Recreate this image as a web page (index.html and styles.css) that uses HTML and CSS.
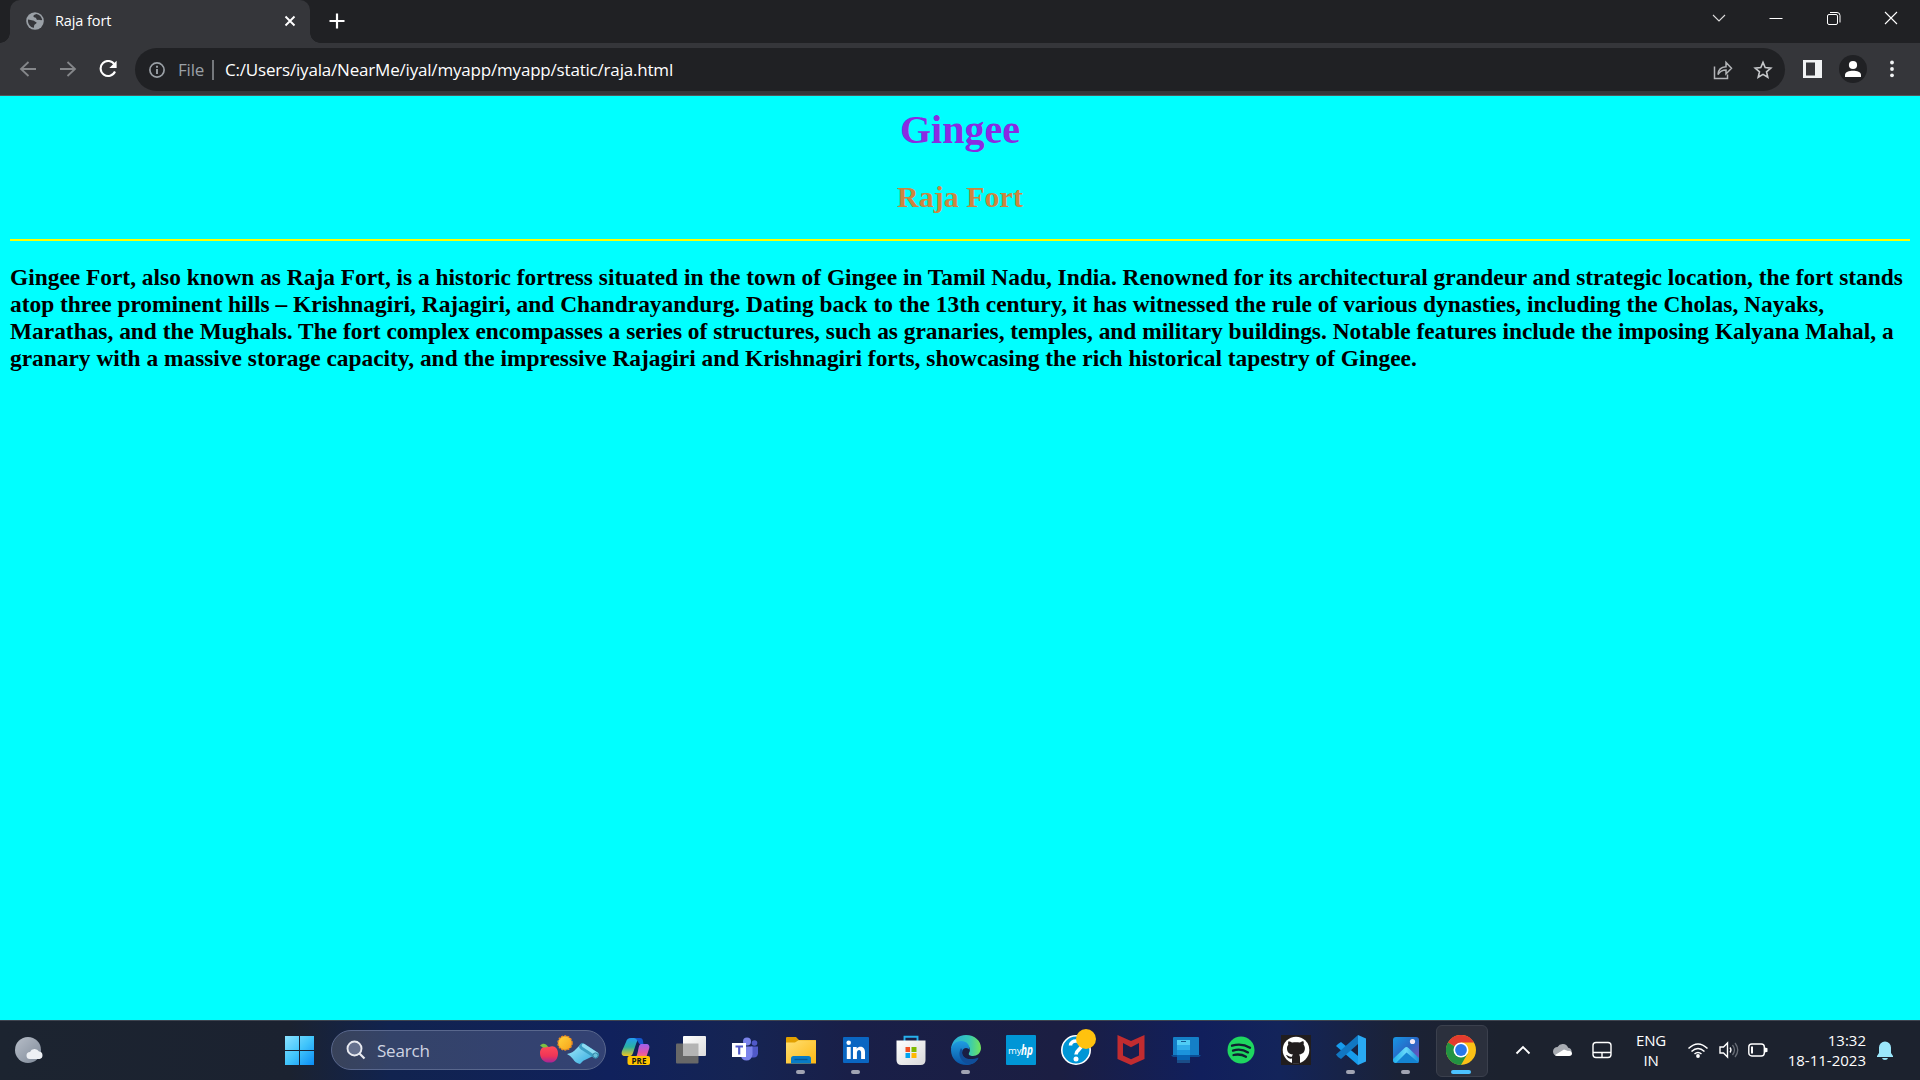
FILE: index.html
```html
<!DOCTYPE html>
<html lang="en">
<head>
<meta charset="utf-8">
<title>Raja fort</title>
<link rel="stylesheet" href="styles.css">
</head>
<body>
<header class="tabstrip">
  <div class="tab">
    <svg class="globe" width="18" height="18" viewBox="0 0 18 18"><circle cx="9" cy="9" r="8.800" fill="#9aa0a6"/><path d="M2 7.500c2 .2 3.500.8 5 1 1.500.2 1.800 1.200 3 1.500 1 .5.600 1.600-.5 2-1.300.5-1.500 1.800-1.500 3.800C4 15.500 1.500 11.500 2 7.500zM10.500 2c-2 .5-3.500 1.500-3 2.700.5.900 2.500.3 2.700 1.500.2 1 .5 1.900 2 1.700 1.500-.2 2.300.5 4 .2C15.800 5 13.500 2.500 10.500 2z" fill="#35363a"/></svg>
    <span class="tab-title">Raja fort</span>
    <svg class="tab-close" width="12" height="12" viewBox="0 0 12 12"><path d="M1.500 1.500l9 9m0-9l-9 9" stroke="#fff" stroke-width="1.900"/></svg>
  </div>
  <svg class="newtab" width="16" height="16" viewBox="0 0 16 16"><path d="M8 .5v15M.5 8h15" stroke="#fff" stroke-width="2.200"/></svg>
  <div class="window-controls">
    <svg width="16" height="16" viewBox="0 0 16 16"><path d="M2 5l6 6 6-6" fill="none" stroke="#ddd" stroke-width="1.100"/></svg>
    <svg width="16" height="16" viewBox="0 0 16 16"><path d="M1.500 8.500h13" stroke="#fff"/></svg>
    <svg width="16" height="16" viewBox="0 0 16 16"><rect x="1.500" y="4.500" width="10" height="10" rx="1.500" fill="none" stroke="#fff"/><path d="M4 2.500h7a3 3 0 0 1 3 3v7" fill="none" stroke="#fff"/></svg>
    <svg width="16" height="16" viewBox="0 0 16 16"><path d="M2 2l12 12M14 2L2 14" stroke="#fff" stroke-width="1.100"/></svg>
  </div>
</header>
<nav class="toolbar">
  <div class="nav-buttons">
    <svg width="18" height="18" viewBox="0 0 18 18"><path d="M17 9H2m7.500-7L2 9l7.500 7" fill="none" stroke="#85878a" stroke-width="1.800"/></svg>
    <svg width="18" height="18" viewBox="0 0 18 18"><path d="M1 9h15M8.500 2L16 9l-7.500 7" fill="none" stroke="#85878a" stroke-width="1.800"/></svg>
    <svg width="18" height="18" viewBox="0 0 18 18"><path d="M15.500 4.500A7.500 7.500 0 1 0 16 11.500" fill="none" stroke="#fff" stroke-width="2.100"/><path d="M17.600.8v7.300h-7.300z" fill="#fff"/></svg>
  </div>
  <div class="omnibox">
    <svg class="info" width="16" height="16" viewBox="0 0 16 16"><circle cx="8" cy="8" r="7.100" fill="none" stroke="#9aa0a6" stroke-width="1.700"/><path d="M8 7v5M8 3.800v2" stroke="#9aa0a6" stroke-width="1.900"/></svg>
    <span class="scheme">File</span>
    <span class="divider"></span>
    <span class="url">C:/Users/iyala/NearMe/iyal/myapp/myapp/static/raja.html</span>
    <svg class="share" width="20" height="20" viewBox="0 0 20 20"><path d="M1.500 6.500v12h13v-4" fill="none" stroke="#b3b5b8" stroke-width="1.500"/><path d="M5 14.500c.3-5 3-7.500 8-7.700V2.500l5.500 5.800L13 14v-4c-3.500 0-6 1.200-8 4.500z" fill="none" stroke="#b3b5b8" stroke-width="1.500"/></svg>
    <svg class="star" width="20" height="20" viewBox="0 0 20 20"><path d="M10 2.400l2.200 5.200 5.600.5-4.300 3.700 1.300 5.500L10 14.400l-4.800 2.900 1.300-5.500-4.300-3.700 5.600-.5z" fill="none" stroke="#c5c7ca" stroke-width="1.600"/></svg>
  </div>
  <div class="actions">
    <svg width="19" height="18" viewBox="0 0 19 18"><path fill-rule="evenodd" d="M0 0h19v18H0zM3 2.500v13h9v-13z" fill="#f1f3f4"/></svg>
    <svg width="28" height="28" viewBox="0 0 28 28"><circle cx="14" cy="14" r="14" fill="#202124"/><circle cx="14" cy="10" r="4.100" fill="#fff"/><path d="M6 22v-2c0-3 4-4.300 8-4.300s8 1.300 8 4.300v2z" fill="#fff"/></svg>
    <svg width="6" height="18" viewBox="0 0 6 18"><g fill="#f1f3f4"><circle cx="3" cy="2.500" r="1.900"/><circle cx="3" cy="9" r="1.900"/><circle cx="3" cy="15.300" r="1.900"/></g></svg>
  </div>
</nav>
<main class="page">
  <h1 class="place">Gingee</h1>
  <h2 class="fort">Raja Fort</h2>
  <hr class="rule">
  <h3 class="about">Gingee Fort, also known as Raja Fort, is a historic fortress situated in the town of Gingee in Tamil Nadu, India. Renowned for its architectural grandeur and strategic location, the fort stands<br>atop three prominent hills – Krishnagiri, Rajagiri, and Chandrayandurg. Dating back to the 13th century, it has witnessed the rule of various dynasties, including the Cholas, Nayaks,<br>Marathas, and the Mughals. The fort complex encompasses a series of structures, such as granaries, temples, and military buildings. Notable features include the imposing Kalyana Mahal, a<br>granary with a massive storage capacity, and the impressive Rajagiri and Krishnagiri forts, showcasing the rich historical tapestry of Gingee.</h3>
</main>
<footer class="taskbar">
  <div class="weather">
    <svg width="30" height="30" viewBox="0 0 30 30"><defs><linearGradient id="moon" x2="1" y2="1"><stop stop-color="#b7bec8"/><stop offset="1" stop-color="#7f8a99"/></linearGradient></defs><circle cx="15" cy="15" r="13" fill="url(#moon)"/><path d="M17 24a3.500 3.500 0 0 1 0-7 5 5 0 0 1 9-.5 3.800 3.800 0 0 1 .5 7.500z" fill="#edf0f4"/></svg>
  </div>
  <div class="start">
    <svg width="30" height="30" viewBox="0 0 30 30"><defs><linearGradient id="win" x2="1" y2="1"><stop stop-color="#8be2ff"/><stop offset=".5" stop-color="#41c5fb"/><stop offset="1" stop-color="#0a8cf5"/></linearGradient></defs><path d="M1 1h14v14H1zM16 1h14v14H16zM1 16h14v14H1zM16 16h14v14H16z" fill="url(#win)"/></svg>
  </div>
  <div class="search">
    <svg class="lens" width="20" height="20" viewBox="0 0 20 20"><circle cx="8.500" cy="8.500" r="7" fill="#65708d" stroke="#e8eaf0" stroke-width="1.900"/><path d="M13.500 13.500L18.500 18.500" stroke="#e8eaf0" stroke-width="2.200"/></svg>
    <span class="search-text">Search</span>
    <svg class="doodle" width="62" height="32" viewBox="0 0 62 32"><defs><linearGradient id="apple" x2="0" y2="1"><stop stop-color="#ff4c58"/><stop offset=".6" stop-color="#ef3557"/><stop offset="1" stop-color="#a3259a"/></linearGradient><linearGradient id="sun" x2="1" y2="1"><stop stop-color="#ffd43b"/><stop offset="1" stop-color="#f6a31b"/></linearGradient><linearGradient id="mat" x2="1" y2="1"><stop stop-color="#a5eafa"/><stop offset="1" stop-color="#30a9df"/></linearGradient></defs><path d="M11 13c5-2.500 9 1 9 6 0 6-3.500 9.500-6.500 9.500-1.500-.2-2 .2-3.500 0C5 28 2 24 2 19c0-5 5-8 9-6z" fill="url(#apple)"/><path d="M2 11.500c3-3 6-2 8 1-3 2-6 1-8-1z" fill="#7bc143"/><circle cx="27" cy="9" r="7" fill="url(#sun)" stroke="#ef8d20" stroke-width="1.500" stroke-dasharray="2 1.200"/><path d="M29 20q6-1 9-5l5-5 14 11-8 4q-4 1-7 5-5-1-7-5-2-3-6-5z" fill="url(#mat)"/><path d="M44.500 12.500l13 8.500" stroke="#3c9fc4" stroke-width="6.500" stroke-linecap="round"/><path d="M45.500 11.500l13 8.500" stroke="#8ddcf2" stroke-width="3.500" stroke-linecap="round"/><circle cx="57.500" cy="21.500" r="2.600" fill="#69bdd8" stroke="#2c7fa2"/></svg>
  </div>
  <div class="apps">
    <div class="app"><svg width="30" height="30" viewBox="0 0 30 30"><defs><linearGradient id="cpa" x2="0" y2="1"><stop stop-color="#239cf0"/><stop offset=".5" stop-color="#2ab1a2"/><stop offset="1" stop-color="#f0c51d"/></linearGradient><linearGradient id="cpb" x2="0" y2="1"><stop stop-color="#9c61ee"/><stop offset=".6" stop-color="#e055ac"/><stop offset="1" stop-color="#ff7c65"/></linearGradient></defs><path d="M10 3h9c-2 1-3 3-4 6l-3 9c-.7 2-1.500 3-3 3H4c-3 0-4-2-3-5l4-9c1-3 2-4 5-4z" fill="url(#cpa)"/><path d="M13 3h6c3 0 3 3 3.500 6H19c-2-.5-2-5-6-6z" fill="#1457cf"/><path d="M20 9h5c3 0 4 2 3 5l-3 9H14c1.500-1 2-3 3-7 .7-3 1-7 3-7z" fill="url(#cpb)"/><rect x="6.500" y="21" width="22.500" height="9" rx="2" fill="#ffc400"/><text class="pre" x="18" y="28.500" text-anchor="middle">PRE</text></svg></div>
    <div class="app"><svg width="30" height="30" viewBox="0 0 30 30"><defs><linearGradient id="tv" x2="1" y2="1"><stop stop-color="#fff"/><stop offset="1" stop-color="#dcdcdc"/></linearGradient></defs><rect y="8.500" width="22.500" height="20" rx="1" fill="#686868"/><rect x="7" y="1" width="23" height="20" rx="1" fill="url(#tv)"/><path d="M7 8.500h15.500V21H7z" fill="#b4b4b4"/></svg></div>
    <div class="app"><svg width="30" height="30" viewBox="0 0 30 30"><circle cx="16" cy="6.500" r="4" fill="#7b83eb"/><circle cx="23.500" cy="8" r="2.800" fill="#5059c9"/><path d="M20 11.500h7v7q-.5 4-4 4h-3z" fill="#5059c9"/><path d="M10 11.500h11.500v8q-1 6-6 6t-5.500-5z" fill="#7b83eb"/><path d="M1 8h14v14H1z" fill="#fff"/><path d="M4.500 11.500h7.500M8.200 11v8.500" stroke="#5059c9" stroke-width="2.200"/></svg></div>
    <div class="app running"><svg width="30" height="30" viewBox="0 0 30 30"><defs><linearGradient id="fold" x2="1" y2="1"><stop stop-color="#ffdf72"/><stop offset="1" stop-color="#fdb813"/></linearGradient></defs><path d="M0 3q0-1 1-1h9l3 3h16q1 0 1 1v5H0z" fill="#e2a000"/><path d="M0 7.500h9l3.500-2.300H30V28.500H0z" fill="url(#fold)"/><path d="M5 28.500v-5q0-2.500 2.500-2.500h15q2.500 0 2.500 2.500v5z" fill="#087bc6"/><path d="M8.500 24.500h13" stroke="#075896" stroke-width="1.300"/></svg></div>
    <div class="app running"><svg width="30" height="30" viewBox="0 0 30 30"><rect x="2" y="2" width="26" height="26" rx="1" fill="#0a66c2"/><circle cx="7.700" cy="7.800" r="2.300" fill="#fff"/><path d="M5.800 12h3.900v12H5.800zM12 12h3.700v1.700c2.500-3.300 8.300-2.500 8.300 3.300v7h-3.900v-6.200c0-4-4.200-3.700-4.200 0V24H12z" fill="#fff"/></svg></div>
    <div class="app"><svg width="30" height="30" viewBox="0 0 30 30"><defs><linearGradient id="bag" x2="1" y2="1"><stop stop-color="#fff"/><stop offset="1" stop-color="#d9d9d9"/></linearGradient></defs><path d="M8.500 7V1.800h13V7" fill="none" stroke="#27b0ec" stroke-width="1.900"/><path d="M.5 5.500h29V25q0 5-5 5h-19q-5 0-5-5z" fill="url(#bag)"/><path d="M9.500 12H14v5H9.500z" fill="#f25022"/><path d="M15.500 12h5v5h-5z" fill="#7fba00"/><path d="M9.500 18H14v5H9.500z" fill="#00a4ef"/><path d="M15.500 18h5v5h-5z" fill="#ffb900"/></svg></div>
    <div class="app running"><svg width="30" height="30" viewBox="0 0 30 30"><defs><linearGradient id="edg"><stop stop-color="#2aa9dc"/><stop offset=".6" stop-color="#35c9b7"/><stop offset="1" stop-color="#72e55b"/></linearGradient><linearGradient id="edb" x2="0" y2="1"><stop stop-color="#1f9de1"/><stop offset="1" stop-color="#0953a4"/></linearGradient></defs><path d="M0 14C1 5 7 0 15 0c9 0 15 6 15 13 0 5-4 8-8 8-3 0-5-1-4-3 3-5-1-9-7-9C6 9 2 11 0 14z" fill="url(#edg)"/><path d="M0 15c0-5 5-9 10-9 6 0 9 4 8.500 9-1-2-4-3-6-1-4 4 0 11 7 11 4 0 6-1 8-2-3 5-7 7-12 7C7 30 0 24 0 15z" fill="url(#edb)"/><path d="M10 13c-4 7 0 15 8 16.500 4-.5 8-3.500 9.500-7-10 4-18 0-16-7z" fill="#104e9a"/></svg></div>
    <div class="app"><svg width="30" height="30" viewBox="0 0 30 30"><rect width="30" height="30" rx="1" fill="#0096d6"/><text class="my" x="2" y="18.500">my</text><text class="hp" x="15" y="20" textLength="12" lengthAdjust="spacingAndGlyphs">hp</text></svg></div>
    <div class="app badge"><svg width="30" height="30" viewBox="0 0 30 30"><circle cx="15" cy="15" r="14.200" fill="#0096d6" stroke="#fff" stroke-width="1.600"/><path d="M9.500 10.500c0-6 11-6 11 0 0 4-5.500 4.500-5.500 9" fill="none" stroke="#fff" stroke-width="3.600"/><circle cx="15" cy="24" r="2.500" fill="#fff"/></svg></div>
    <div class="app"><svg width="30" height="30" viewBox="0 0 30 30"><path d="M1.500 0L15 6 28.500 0v24L15 30 1.500 24zM7 8v12.500l8 3.700 8-3.700V8l-8 4.200z" fill="#c12c30" fill-rule="evenodd"/></svg></div>
    <div class="app"><svg width="30" height="30" viewBox="0 0 30 30"><path d="M2 3q0-1 1-1h24q1 0 1 1v17H2z" fill="#147fc7"/><path d="M0 20h30l-2 2H2z" fill="#0b4c94"/><path d="M6 5h13v5H6z" fill="#50cdf5"/><path d="M6 10h13v5H6z" fill="#2faeea"/><path d="M6 15h13v5H6z" fill="#1b93dc"/><path d="M6 20h13v5H6z" fill="#0763b3"/><path d="M6 25h13v3H6z" fill="#1b4c87"/><path d="M10 6.500h5" stroke="#155c92"/></svg></div>
    <div class="app"><svg width="30" height="30" viewBox="0 0 30 30"><circle cx="15" cy="15" r="13.500" fill="#1ed760"/><path d="M6 10.700c6-1.700 12.500-1.200 18 2M7 15.600c5-1.500 10.500-1 15 1.800M7.500 20c4.500-1 8.500-.7 12.500 1.700" fill="none" stroke="#102031" stroke-width="2.300" stroke-linecap="round"/></svg></div>
    <div class="app"><svg width="30" height="30" viewBox="0 0 30 30"><path d="M0 0h30v30H0z" fill="#211d1e"/><circle cx="15" cy="15" r="13.300" fill="#fff"/><path d="M11 28.500v-5c-4 .8-4.500-2-6-3 2-.8 2.500 2 6 1.200 0-1 .4-1.700 1-2.200-5-.6-6-3.500-6-6.300 0-1.500.5-2.500 1.300-3.500-.4-1.300-.2-2.500.2-3.500 1.500 0 2.700.8 3.700 1.400 2.500-.6 5-.6 7.500 0 1-.7 2.300-1.400 3.700-1.400.5 1 .5 2.300.2 3.500.9 1 1.300 2.200 1.300 3.500 0 4.500-3 6-6 6.300.7.700 1.100 1.500 1.100 3v6z" fill="#211d1e"/></svg></div>
    <div class="app running"><svg width="30" height="30" viewBox="0 0 30 30"><path d="M2 9l3-2 17 14v9L0 11z" fill="#169ced"/><path d="M2 22l3 2L22 9V0L0 19.500z" fill="#1177c2"/><path d="M22 0l8 3.500v23L22 30z" fill="#29a9f3"/></svg></div>
    <div class="app running"><svg width="30" height="30" viewBox="0 0 30 30"><defs><linearGradient id="pho" x2="1" y2="1"><stop stop-color="#1797e4"/><stop offset=".5" stop-color="#2869c7"/><stop offset="1" stop-color="#8a4ab3"/></linearGradient><linearGradient id="hill" x2="1"><stop stop-color="#1fb0ed"/><stop offset=".5" stop-color="#68d9fa"/><stop offset="1" stop-color="#168bd8"/></linearGradient></defs><rect x="2" y="2" width="26" height="26" rx="3" fill="url(#pho)"/><path d="M2 24l11.500-11q2-2 4 0L28 23v2q0 3-3 3H5q-3 0-3-3z" fill="url(#hill)"/><path d="M15.500 17.500L28 28H5z" fill="#1484d2"/><circle cx="21.500" cy="6.500" r="2.600" fill="#f6e9f5"/></svg></div>
    <div class="app active"><svg width="30" height="30" viewBox="0 0 30 30"><circle cx="15" cy="15" r="15" fill="#fbc116"/><path d="M15 15L2 7.500A15 15 0 0 1 28 7.500H15z" fill="#e33b2e"/><path d="M2 7.500A15 15 0 0 0 15 30l6.500-11.200L15 15z" fill="#229342"/><circle cx="15" cy="15" r="7.500" fill="#fff"/><circle cx="15" cy="15" r="5.900" fill="#2878ea"/></svg></div>
  </div>
  <div class="tray">
    <svg width="16" height="16" viewBox="0 0 16 16"><path d="M1.500 11.500L8 5l6.500 6.500" fill="none" stroke="#fff" stroke-width="1.900"/></svg>
    <svg width="20" height="16" viewBox="0 0 20 16"><path d="M4.500 14a4.500 4.500 0 0 1 0-9 6 6 0 0 1 10.700.8 4.200 4.200 0 0 1 .3 8.200z" fill="#a7abb1"/><path d="M2 13l9-5.500 4 1.500a3 3 0 0 1 4 2.500c0 1.500-1 2.500-3 2.500H4.500q-2 0-2.500-1z" fill="#fff"/></svg>
    <svg width="20" height="18" viewBox="0 0 20 18"><rect x="1" y="1.500" width="18" height="15" rx="3" fill="none" stroke="#fff" stroke-width="1.400"/><path d="M1 11.500h18M10 11.500v5" stroke="#fff" stroke-width="1.400"/></svg>
    <div class="lang"><span>ENG</span><span>IN</span></div>
    <svg width="22" height="18" viewBox="0 0 22 18"><path d="M1.500 7.500q9.500-9 19 0M4.500 10.500q6.500-6 13 0M7.500 13q3.500-3 7 0" fill="none" stroke="#fff" stroke-width="1.500"/><circle cx="11" cy="15" r="1.900" fill="#fff"/></svg>
    <svg width="20" height="18" viewBox="0 0 20 18"><path d="M1 6h3.500l4-4v14l-4-4H1z" fill="none" stroke="#fff" stroke-width="1.400"/><path d="M11 6.500q2 2.500 0 5" fill="none" stroke="#fff" stroke-width="1.300"/><path d="M13.500 4q4 5 0 10M16 2q5.500 7 0 14" fill="none" stroke="#686d76" stroke-width="1.300"/></svg>
    <svg width="20" height="16" viewBox="0 0 20 16"><rect x=".8" y="2" width="15.500" height="12" rx="3" fill="none" stroke="#fff" stroke-width="1.400"/><path d="M3 4.500h2v7H3zM17 5.500l2.500.8v3.500l-2.500.8z" fill="#fff"/></svg>
    <div class="clock"><span class="time">13:32</span><span class="date">18-11-2023</span></div>
    <svg width="18" height="22" viewBox="0 0 18 22"><path d="M3 14V8.500a6 6 0 0 1 12 0V14l2 3v1H1v-1zM6 19h6q-.5 2-3 2t-3-2z" fill="#9be7fb"/></svg>
  </div>
</footer>
</body>
</html>
```
FILE: styles.css
```css
* { box-sizing: border-box; }
body {
  margin: 0;
  height: 1080px;
  display: flex;
  flex-direction: column;
  overflow: hidden;
  font-family: "Open Sans", "Noto Sans", sans-serif;
  color: #fff;
}
svg { display: block; flex: none; }

/* Tab strip */
.tabstrip { height: 43px; flex: none; display: flex; background: #202124; padding-left: 10px; }
.tab { position: relative; width: 300px; height: 43px; display: flex; align-items: center; padding: 0 14px 1px 16px; background: #35363a; border-radius: 10px 10px 0 0; }
.tab::before, .tab::after { content: ""; position: absolute; bottom: 0; width: 10px; height: 10px; }
.tab::before { left: -10px; background: radial-gradient(circle at 0 0, transparent 9.500px, #35363a 10px); }
.tab::after { right: -10px; background: radial-gradient(circle at 100% 0, transparent 9.500px, #35363a 10px); }
.tab-title { margin: -2px 0 0 11px; font-size: 14.500px; letter-spacing: -0.100px; white-space: nowrap; }
.tab-close { margin-left: auto; }
.newtab { margin: 13px 0 0 19px; }
.window-controls { margin: 10px 21px 0 auto; display: flex; gap: 41.300px; }

/* Toolbar */
.toolbar { height: 53px; flex: none; display: flex; align-items: flex-start; background: #35363a; border-bottom: 1px solid #55565a; }
.nav-buttons { width: 135px; display: flex; gap: 22px; padding: 17px 0 0 19px; }
.omnibox { width: 1650px; height: 43px; margin-top: 5px; display: flex; align-items: center; background: #202124; border-radius: 22px; padding: 0 12px 0 14px; }
.scheme { width: 26px; margin: -1px 0 0 13px; font-size: 17px; letter-spacing: -0.200px; color: #9aa0a6; }
.divider { width: 2px; height: 20px; margin: 0 11px 0 8px; background: #75787c; }
.url { margin-top: -1px; font-size: 17px; letter-spacing: -0.190px; white-space: nowrap; }
.share { margin-left: auto; }
.star { margin-left: 20px; }
.actions { display: flex; align-items: center; height: 52px; padding: 0 0 0 18px; }
.actions svg:nth-child(2) { margin-left: 17px; }
.actions svg:nth-child(3) { margin-left: 22px; }

/* Web page */
.page { flex: 1; background: #0ff; padding: 0 10px; color: #000; font-family: "Liberation Serif", "Times New Roman", serif; }
.place { margin: 0; padding-top: 11px; font-size: 40px; line-height: 46px; text-align: center; color: blueviolet; }
.fort { margin: 27px 0 0; font-size: 30px; line-height: 34px; text-align: center; color: #cd853f; }
.rule { height: 2px; margin: 25px 0 0; border: 0; background: #ff0; }
.about { margin: 23px 0 0; font-size: 23.400px; line-height: 27px; white-space: nowrap; }

/* Taskbar */
.taskbar {
  height: 60px; flex: none; display: flex; align-items: center; padding-bottom: 1px;
  border-top: 1px solid #3f4550;
  background: linear-gradient(90deg, #1c2430 0, #1b2230 290px, #11234f 390px, #10215c 610px, #152453 740px, #191f48 850px, #1b1e42 1060px, #111f5c 1200px, #13245a 1280px, #1b2236 1400px, #1c222e 1500px, #1c222e 100%);
}
.weather { width: 284px; padding-left: 13px; }
.start { width: 47px; }
.search { width: 275px; height: 40px; display: flex; align-items: center; background: rgba(255, 255, 255, .15); border: 1px solid #59678d; border-radius: 20px; padding-left: 14px; }
.search-text { margin-left: 11px; font-size: 17px; letter-spacing: -0.200px; color: #cfd4e2; }
.doodle { margin-left: auto; margin-right: 5px; }
.apps { display: flex; margin-left: 2px; }
.app { position: relative; width: 55px; height: 58px; display: grid; place-items: center; }
.running::after { content: ""; position: absolute; left: 23px; bottom: 5px; width: 9px; height: 4px; border-radius: 2px; background: #a1a4b3; }
.badge::after { content: ""; position: absolute; left: 28px; top: 8px; width: 20px; height: 20px; border-radius: 50%; background: #ffc20e; }
.active::before { content: ""; position: absolute; left: 3px; top: 4px; width: 50px; height: 50px; border: 1px solid #3b404d; border-radius: 6px; background: #2b303d; }
.active::after { content: ""; position: absolute; left: 18px; bottom: 5px; width: 20px; height: 4px; border-radius: 2px; background: #4cc2ff; }
.active svg { position: relative; }
.pre { font: bold 8px "Open Sans", sans-serif; fill: #151515; }
.my { font: 9.500px "Open Sans", sans-serif; fill: #fff; }
.hp { font: italic bold 14px "Open Sans", sans-serif; fill: #fff; }
.tray { margin-left: auto; margin-right: 16px; display: grid; grid-template-columns: 40px 40px 38px 60px 33px 29px 30px 93px 38px; align-items: center; justify-items: center; }
.lang, .clock { display: flex; flex-direction: column; font-size: 15px; line-height: 20px; letter-spacing: -0.200px; }
.lang { align-items: center; }
.clock { align-items: flex-end; justify-self: end; letter-spacing: 0; }
```
